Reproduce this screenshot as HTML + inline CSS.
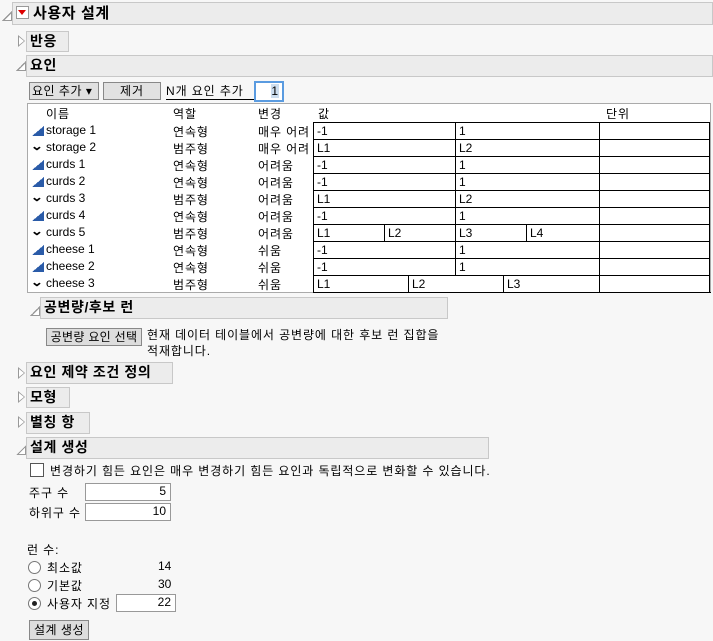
<!DOCTYPE html>
<html><head><meta charset="utf-8"><style>
*{box-sizing:border-box;margin:0;padding:0}
body{width:713px;height:641px;background:#f7f7f7;font-family:"Liberation Sans","Noto Sans CJK KR",sans-serif;font-size:12px;color:#000;position:relative;overflow:hidden;letter-spacing:0.9px}
.a{position:absolute;white-space:nowrap}
.l{letter-spacing:0}
.hd{position:absolute;background:#ececec;border:1px solid #c8c8c8;font-weight:bold;font-size:14px;padding-left:3px;line-height:19px;letter-spacing:0.6px}
.tri{position:absolute;width:0;height:0;border-left:7px solid #999;border-top:6px solid transparent;border-bottom:6px solid transparent}
.tri::after{content:"";position:absolute;left:-6px;top:-4px;border-left:5px solid #fff;border-top:4px solid transparent;border-bottom:4px solid transparent}
.open{position:absolute;width:10px;height:10px;background:linear-gradient(135deg,transparent 50%,#999 50%);}
.open::after{content:"";position:absolute;left:3px;top:3px;width:6px;height:6px;background:linear-gradient(135deg,transparent 50%,#fff 50%)}
.btn{position:absolute;background:#e1e1e1;border:1px solid #888;text-align:center;line-height:16px}
.inp{position:absolute;background:#fff;border:1px solid #999;text-align:right;padding-right:4px;line-height:15px;letter-spacing:0}
.cell{position:absolute;border-left:1px solid #000;border-top:1px solid #000;height:18px;padding-left:3px;line-height:16px;letter-spacing:0}
.ic{position:absolute;width:12px;height:10px;background:linear-gradient(to top left,#2a5ba8 50%,transparent 50%)}
.radio{position:absolute;width:13px;height:13px;border:1px solid #777;border-radius:50%;background:#fff}
</style></head><body>
<div class="open" style="left:2px;top:11px"></div>
<div class="hd" style="left:12px;top:2px;width:701px;height:23px;font-size:15px;padding-left:20px;line-height:21px">사용자 설계</div>
<div class="a" style="left:16px;top:6px;width:13px;height:13px;border:1px solid #999;background:#fff"></div>
<div class="a" style="left:18px;top:10px;border-top:5px solid #d00;border-left:4px solid transparent;border-right:4px solid transparent"></div>

<div class="tri" style="left:18px;top:35px"></div>
<div class="hd" style="left:26px;top:31px;width:43px;height:21px">반응</div>
<div class="open" style="left:16px;top:61px"></div>
<div class="hd" style="left:26px;top:55px;width:687px;height:22px">요인</div>

<div class="btn" style="left:29px;top:82px;width:70px;height:18px;text-align:left;padding-left:2px;letter-spacing:0.5px">요인 추가 ▾</div>
<div class="btn" style="left:103px;top:82px;width:58px;height:18px">제거</div>
<div class="a" style="left:166px;top:83px;width:88px;border-bottom:1px solid #000;line-height:16px">N개 요인 추가</div>
<div class="a" style="left:254px;top:81px;width:30px;height:21px;border:2px solid #5a9be0;background:#fff;text-align:right;padding-right:3px;line-height:17px"><span style="background:#cde">1</span></div>

<div class="a" style="left:27px;top:103px;width:684px;height:190px;background:#fff;border:1px solid #aaa"></div>
<div class="a" style="left:46px;top:105px">이름</div><div class="a" style="left:173px;top:105px">역할</div><div class="a" style="left:258px;top:105px">변경</div><div class="a" style="left:318px;top:105px">값</div><div class="a" style="left:606px;top:105px">단위</div>
<div id="rows"></div>
<div class="a" style="left:313px;top:292px;width:398px;border-top:1px solid #000"></div>
<div class="a" style="left:709px;top:122px;height:170px;border-left:1px solid #000"></div>

<div class="open" style="left:30px;top:306px"></div>
<div class="hd" style="left:40px;top:297px;width:408px;height:22px">공변량/후보 런</div>
<div class="btn" style="left:46px;top:328px;width:96px;height:18px;background:#ddd;letter-spacing:0.3px">공변량 요인 선택</div>
<div class="a" style="left:147px;top:327px;line-height:16px">현재 데이터 테이블에서 공변량에 대한 후보 런 집합을<br>적재합니다.</div>

<div class="tri" style="left:18px;top:367px"></div>
<div class="hd" style="left:26px;top:362px;width:147px;height:22px">요인 제약 조건 정의</div>
<div class="tri" style="left:18px;top:391px"></div>
<div class="hd" style="left:26px;top:387px;width:44px;height:21px">모형</div>
<div class="tri" style="left:18px;top:416px"></div>
<div class="hd" style="left:26px;top:412px;width:64px;height:22px">별칭 항</div>
<div class="open" style="left:16px;top:445px"></div>
<div class="hd" style="left:26px;top:437px;width:463px;height:22px">설계 생성</div>

<div class="a" style="left:30px;top:463px;width:14px;height:14px;border:1px solid #555;background:#fff"></div>
<div class="a" style="left:50px;top:462px">변경하기 힘든 요인은 매우 변경하기 힘든 요인과 독립적으로 변화할 수 있습니다.</div>
<div class="a" style="left:29px;top:484px">주구 수</div>
<div class="inp" style="left:85px;top:483px;width:86px;height:18px">5</div>
<div class="a" style="left:29px;top:504px">하위구 수</div>
<div class="inp" style="left:85px;top:503px;width:86px;height:18px">10</div>
<div class="a" style="left:27px;top:541px">런 수:</div>
<div class="radio" style="left:28px;top:561px"></div><div class="a" style="left:47px;top:559px">최소값</div><div class="a l" style="left:158px;top:559px">14</div>
<div class="radio" style="left:28px;top:579px"></div><div class="a" style="left:47px;top:577px">기본값</div><div class="a l" style="left:158px;top:577px">30</div>
<div class="radio" style="left:28px;top:597px"><div class="a" style="left:3px;top:3px;width:5px;height:5px;border-radius:50%;background:#222"></div></div><div class="a" style="left:47px;top:595px">사용자 지정</div>
<div class="inp" style="left:116px;top:594px;width:60px;height:18px">22</div>
<div class="btn" style="left:29px;top:620px;width:60px;height:20px;background:#ddd;line-height:18px;letter-spacing:0.5px">설계 생성</div>

<script>
var d=[["c","storage 1","연속형","매우 어려",[["-1",142],["1",144]]],
["k","storage 2","범주형","매우 어려",[["L1",142],["L2",144]]],
["c","curds 1","연속형","어려움",[["-1",142],["1",144]]],
["c","curds 2","연속형","어려움",[["-1",142],["1",144]]],
["k","curds 3","범주형","어려움",[["L1",142],["L2",144]]],
["c","curds 4","연속형","어려움",[["-1",142],["1",144]]],
["k","curds 5","범주형","어려움",[["L1",71],["L2",71],["L3",71],["L4",73]]],
["c","cheese 1","연속형","쉬움",[["-1",142],["1",144]]],
["c","cheese 2","연속형","쉬움",[["-1",142],["1",144]]],
["k","cheese 3","범주형","쉬움",[["L1",95],["L2",95],["L3",96]]]];
var h="";d.forEach(function(r,i){var y=122+i*17;
h+=r[0]=="c"?'<div class="ic" style="left:32px;top:'+(y+4)+'px"></div>':'<div class="a" style="left:32px;top:'+(y)+'px;font-weight:bold;font-size:12px;transform:scaleX(1.3)">⌄</div>';
h+='<div class="a l" style="left:46px;top:'+(y+1)+'px">'+r[1]+'</div><div class="a" style="left:173px;top:'+(y+1)+'px">'+r[2]+'</div><div class="a" style="left:258px;top:'+(y+1)+'px;width:55px;overflow:hidden">'+r[3]+'</div>';
var x=313;r[4].forEach(function(c){h+='<div class="cell" style="left:'+x+'px;top:'+y+'px;width:'+c[1]+'px">'+c[0]+'</div>';x+=c[1];});
h+='<div class="cell" style="left:599px;top:'+y+'px;width:111px"></div>';});
document.getElementById("rows").innerHTML=h;
</script>
</body></html>
